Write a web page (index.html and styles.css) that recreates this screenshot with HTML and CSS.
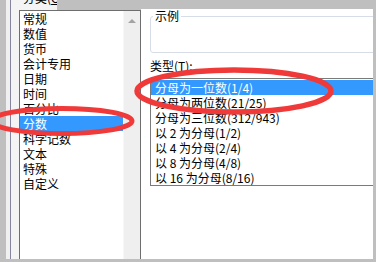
FILE: index.html
```html
<!DOCTYPE html>
<html lang="zh-CN">
<head>
    <meta charset="UTF-8">
    <meta name="viewport" content="width=device-width, initial-scale=1.0">
    <title>设置单元格格式 - 分数</title>
    <link rel="stylesheet" href="styles.css">
</head>
<body>
    <div class="frame">
        <div class="dialog">
            <div class="gutter"><div class="gutter-inner"></div></div>

            <div class="category-col">
                <div class="cat-head">
                    <div class="caption"><span>分类(<u>C</u>):</span></div>
                    <div class="crop"></div>
                </div>
                <div class="category">
                    <ul class="cat-list">
                        <li>常规</li>
                        <li>数值</li>
                        <li>货币</li>
                        <li>会计专用</li>
                        <li>日期</li>
                        <li>时间</li>
                        <li>百分比</li>
                        <li class="selected">分数</li>
                        <li>科学记数</li>
                        <li>文本</li>
                        <li>特殊</li>
                        <li>自定义</li>
                    </ul>
                    <div class="scrollbar"><span class="arrow-up"></span></div>
                </div>
            </div>

            <div class="panel">
                <div class="crop panel-crop"></div>
                <fieldset class="sample">
                    <legend>示例</legend>
                </fieldset>
                <div class="type-label">类型(<u>T</u>):</div>
                <ul class="type-list">
                    <li class="selected">分母为一位数(1/4)</li>
                    <li>分母为两位数(21/25)</li>
                    <li>分母为三位数(312/943)</li>
                    <li>以 2 为分母(1/2)</li>
                    <li>以 4 为分母(2/4)</li>
                    <li>以 8 为分母(4/8)</li>
                    <li>以 16 为分母(8/16)</li>
                </ul>
            </div>
        </div>

        <!-- red marks drawn over the screenshot -->
        <svg class="marks" width="376" height="262" viewBox="0 0 376 262">
            <ellipse cx="62" cy="121" rx="70" ry="12.5" fill="none" stroke="#f03a3a" stroke-width="5"/>
            <ellipse cx="234" cy="91" rx="97" ry="21" fill="none" stroke="#f03a3a" stroke-width="5.5"/>
        </svg>
    </div>
</body>
</html>
```

FILE: styles.css
```css
body {
    margin: 0;
    padding: 0;
    font-family: "Noto Sans CJK SC", "Microsoft YaHei", sans-serif;
    font-size: 12px;
    color: #000;
}
.frame {
    position: relative;
    width: 376px;
    height: 262px;
    box-sizing: border-box;
    padding: 0 3px 3px 6px;
    background-color: #bfbfbf;
    overflow: hidden;
}
.dialog {
    display: flex;
    height: 100%;
    background: #fff;
}
.gutter {
    width: 13px;
    padding-left: 4px;
    box-sizing: border-box;
    background: #f0f0f0;
}
.gutter-inner {
    height: 100%;
    border-left: 1px solid #8585a0;
    background: #f4f4f4;
}
.crop {
    background-color: #bfbfbf;
}

.category-col {
    display: flex;
    flex-direction: column;
    width: 122px;
}
.cat-head {
    display: flex;
    height: 10px;
}
.caption {
    width: 38px;
    overflow: hidden;
    background: #f4f4f4;
}
.caption span {
    display: block;
    margin: -10px 0 0 4px;
    line-height: 15px;
    white-space: nowrap;
}
.cat-head .crop {
    flex: 1;
}
.category {
    flex: 1;
    display: flex;
    border-left: 1px solid #6e6e6e;
    border-top: 1px solid #6e6e6e;
    border-right: 1px solid #6e6e6e;
}
.cat-list {
    flex: 1;
    list-style: none;
    margin: 0;
    padding: 0;
}
.cat-list li,
.type-list li {
    height: 15px;
    line-height: 15px;
    white-space: nowrap;
}
.cat-list li {
    padding-left: 3px;
}
li.selected {
    background-color: #3399ff;
    color: #fff;
}
.scrollbar {
    width: 17px;
    background: #efefef;
    border-left: 1px solid #f7f7f7;
    box-sizing: border-box;
}
.arrow-up {
    display: block;
    width: 0;
    height: 0;
    margin: 8px auto 0;
    border-left: 4px solid transparent;
    border-right: 4px solid transparent;
    border-bottom: 4px solid #a3a3a3;
}

.panel {
    flex: 1;
    display: flex;
    flex-direction: column;
    padding-left: 9px;
    overflow: hidden;
}
.panel-crop {
    height: 9px;
    margin-left: -9px;
}
.sample {
    height: 44px;
    margin: 0 -20px 0 0;
    padding: 0;
    border: 1px solid #d6dde6;
    border-radius: 3px;
    box-sizing: border-box;
}
.sample legend {
    margin-left: 2px;
    padding: 0 2px;
    line-height: 14px;
}
.type-label {
    margin-top: 5px;
    line-height: 15px;
}
.type-label u {
    text-underline-offset: 1px;
}
.type-list {
    list-style: none;
    margin: 5px -20px 0 0;
    padding: 1px 0 0 0;
    height: 108px;
    border: 1px solid #7a7a7a;
    box-sizing: border-box;
}
.type-list li {
    padding-left: 4px;
}

.marks {
    position: absolute;
    left: 0;
    top: 0;
    pointer-events: none;
}
```
